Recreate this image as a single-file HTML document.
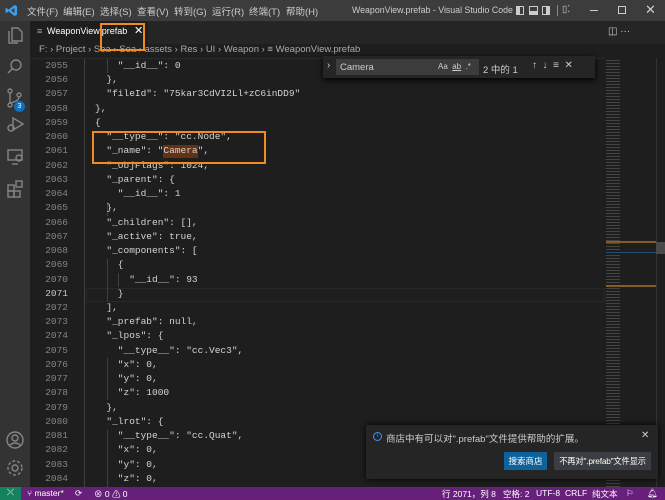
<!DOCTYPE html>
<html><head><meta charset="utf-8"><style>
*{margin:0;padding:0;box-sizing:border-box}
body{width:665px;height:500px;overflow:hidden;background:#1e1e1e;font-family:"Liberation Sans","Noto Sans CJK SC",sans-serif;position:relative;color:#ccc}
.abs{position:absolute;white-space:nowrap}
#title{left:0;top:0;width:665px;height:21px;background:#3c3c3c;font-size:9.5px;color:#ccc}
#title span{position:absolute;top:4px;white-space:nowrap}
#act{left:0;top:21px;width:30px;height:466px;background:#333}
#tabs{left:30px;top:21px;width:635px;height:23px;background:#252526}
#tab{left:30px;top:21px;width:118px;height:23px;background:#1e1e1e;font-size:9px;color:#fff}
#crumb{left:30px;top:44px;width:635px;height:14px;font-size:9.5px;color:#aaa}
.ln{position:absolute;left:30px;width:38px;text-align:right;font:9.5px/14.24px "Liberation Mono",monospace;color:#858585}
.cd{position:absolute;left:95px;font:9.5px/14.24px "Liberation Mono",monospace;color:#d4d4d4;white-space:pre}
#status{left:0;top:487px;width:665px;height:13px;background:#68217a;font-size:8.5px;color:#fff}
#status span{position:absolute;top:1px;white-space:nowrap}
.guide{position:absolute;width:1px;background:#404040}
</style></head><body>
<div id="title" class="abs">
<svg class="abs" style="left:5px;top:4px" width="13" height="13" viewBox="0 0 13 13"><path d="M9.5 1 L12 2.2 V10.8 L9.5 12 L3.5 7.3 L1.5 9 L0.5 8.5 V4.5 L1.5 4 L3.5 5.7Z M9.5 4 L6 6.5 L9.5 9Z" fill="#3ca0ef"/></svg>
<span style="left:27px">文件(F)</span><span style="left:63px">编辑(E)</span><span style="left:100px">选择(S)</span><span style="left:137px">查看(V)</span><span style="left:174px">转到(G)</span><span style="left:212px">运行(R)</span><span style="left:249px">终端(T)</span><span style="left:286px">帮助(H)</span>
<span style="left:352px;font-size:8.8px;top:5px">WeaponView.prefab - Visual Studio Code</span>
<div class="abs" style="left:516px;top:6px;width:8px;height:9px;border:1.5px solid #ccc;border-left-width:4px"></div>
<div class="abs" style="left:529px;top:6px;width:9px;height:9px;border:1.5px solid #ccc;border-bottom-width:4px"></div>
<div class="abs" style="left:542px;top:6px;width:8px;height:9px;border:1.5px solid #ccc;border-right-width:4px"></div>
<div class="abs" style="left:557px;top:5px;width:1px;height:11px;background:#888"></div>
<span style="left:562px;top:4px">▯⁚</span>
<div class="abs" style="left:590px;top:10px;width:8px;height:1px;background:#ccc"></div>
<div class="abs" style="left:618px;top:6px;width:8px;height:8px;border:1px solid #ccc"></div>
<span style="left:645px;top:2px;font-size:13px">✕</span>
</div>
<div id="act" class="abs">
<svg class="abs" style="left:6px;top:4px" width="18" height="180" viewBox="0 0 18 180" fill="none" stroke="#858585" stroke-width="1.4">
<path d="M6 3h6l4 4v9H6z M3 6v12h9"/>
<circle cx="10" cy="40" r="5"/><path d="M6.5 43.5 L2 48"/>
<circle cx="4" cy="66" r="2"/><circle cx="4" cy="80" r="2"/><circle cx="13" cy="70" r="2"/><path d="M4 68v10 M13 72q0 4-9 6"/>
<path d="M7 93l10 6-10 6z"/><circle cx="5" cy="103" r="3"/>
<rect x="2" y="125" width="14" height="10"/><circle cx="13" cy="133" r="3"/><path d="M6 139h6"/>
<rect x="2" y="160" width="6" height="6"/><rect x="2" y="166" width="6" height="6"/><rect x="8" y="166" width="6" height="6"/><rect x="10" y="156" width="6" height="6"/>
</svg>
<div class="abs" style="left:14px;top:80px;width:11px;height:11px;border-radius:50%;background:#0e70c0;color:#fff;font-size:7px;text-align:center;line-height:11px">3</div>
<svg class="abs" style="left:6px;top:410px" width="18" height="50" viewBox="0 0 18 50" fill="none" stroke="#858585" stroke-width="1.4">
<circle cx="9" cy="9" r="8"/><circle cx="9" cy="7" r="3"/><path d="M3.5 14.5q5.5-5 11 0"/>
<circle cx="9" cy="37" r="3"/><circle cx="9" cy="37" r="7" stroke-dasharray="3 2"/>
</svg>
</div>
<div id="tabs" class="abs"></div>
<div id="tab" class="abs"><span class="abs" style="left:7px;top:5px;color:#aaa">≡</span><span class="abs" style="left:17px;top:5px">WeaponView.prefab</span><span class="abs" style="left:104px;top:3px;font-size:11px">✕</span></div>
<span class="abs" style="left:608px;top:26px;font-size:10px;color:#ccc">◫ ···</span>
<div id="crumb" class="abs"><span class="abs" style="left:9px;top:0">F: › Project › Sea › Sea › assets › Res › UI › Weapon › ≡ WeaponView.prefab</span></div>
<div class="abs" style="left:30px;top:58px;width:575px;height:1px;background:#2a2a2a"></div>
<div class="abs" style="left:86px;top:288px;width:519px;height:14px;border:1px solid #282828"></div>
<div class="guide" style="left:84px;top:59px;height:428px"></div>
<div class="guide" style="left:107px;top:59px;height:14px"></div>
<div class="guide" style="left:107px;top:202px;height:14px"></div>
<div class="guide" style="left:107px;top:259px;height:42px"></div>
<div class="guide" style="left:118px;top:273px;height:14px"></div>
<div class="guide" style="left:107px;top:358px;height:42px"></div>
<div class="guide" style="left:107px;top:430px;height:57px"></div>
<div class="ln" style="top:59px">2055<br>2056<br>2057<br>2058<br>2059<br>2060<br>2061<br>2062<br>2063<br>2064<br>2065<br>2066<br>2067<br>2068<br>2069<br>2070<br><span style="color:#c6c6c6">2071</span><br>2072<br>2073<br>2074<br>2075<br>2076<br>2077<br>2078<br>2079<br>2080<br>2081<br>2082<br>2083<br>2084</div>
<div class="abs" style="left:163px;top:145px;width:35px;height:13px;background:#613214"></div>
<div class="cd" style="top:59px">    "__id__": 0
  },
  "fileId": "75kar3CdVI2Ll+zC6inDD9"
},
{
  "__type__": "cc.Node",
  "_name": "Camera",
  "_objFlags": 1024,
  "_parent": {
    "__id__": 1
  },
  "_children": [],
  "_active": true,
  "_components": [
    {
      "__id__": 93
    }
  ],
  "_prefab": null,
  "_lpos": {
    "__type__": "cc.Vec3",
    "x": 0,
    "y": 0,
    "z": 1000
  },
  "_lrot": {
    "__type__": "cc.Quat",
    "x": 0,
    "y": 0,
    "z": 0,</div>
<div class="abs" style="left:606px;top:58px;width:14px;height:429px;background:repeating-linear-gradient(#1e1e1e 0 2px,#444 2px 3px);"></div>
<div class="abs" style="left:606px;top:241px;width:50px;height:2px;background:#8a5a1e"></div>
<div class="abs" style="left:606px;top:252px;width:50px;height:1px;background:#264f78"></div>
<div class="abs" style="left:606px;top:285px;width:50px;height:2px;background:#8a5a1e"></div>
<div class="abs" style="left:656px;top:58px;width:1px;height:429px;background:#333"></div>
<div class="abs" style="left:656px;top:242px;width:9px;height:12px;background:#4a4a4a"></div>
<div class="abs" style="left:323px;top:56px;width:272px;height:22px;background:#252526;box-shadow:0 2px 6px #000"></div>
<span class="abs" style="left:327px;top:60px;font-size:10px;color:#ccc">›</span>
<div class="abs" style="left:336px;top:59px;width:143px;height:16px;background:#3c3c3c"></div>
<span class="abs" style="left:340px;top:62px;font-size:9.5px;color:#ccc">Camera</span>
<span class="abs" style="left:438px;top:62px;font-size:8px;color:#ccc">Aa &nbsp;<u>ab</u> &nbsp;.*</span>
<span class="abs" style="left:483px;top:62px;font-size:9.5px;color:#ccc">2 中的 1</span>
<span class="abs" style="left:532px;top:60px;font-size:10px;color:#ccc">↑ &nbsp;↓ &nbsp;≡ &nbsp;✕</span>
<div class="abs" style="left:366px;top:425px;width:292px;height:54px;background:#252526;box-shadow:0 0 6px #000"></div>
<div class="abs" style="left:373px;top:432px;width:9px;height:9px;border:1px solid #3794ff;border-radius:50%;color:#3794ff;font-size:6px;text-align:center;line-height:7px">i</div>
<span class="abs" style="left:386px;top:431px;font-size:9.5px;color:#ccc">商店中有可以对".prefab"文件提供帮助的扩展。</span>
<span class="abs" style="left:641px;top:430px;font-size:10px;color:#ccc">✕</span>
<div class="abs" style="left:504px;top:452px;width:43px;height:18px;background:#0e639c;color:#fff;font-size:8.5px;text-align:center;line-height:18px">搜索商店</div>
<div class="abs" style="left:554px;top:452px;width:97px;height:18px;background:#3a3d41;color:#fff;font-size:8.3px;text-align:center;line-height:18px;letter-spacing:-.2px">不再对".prefab"文件显示</div>
<div class="abs" style="left:100px;top:23px;width:45px;height:28px;border:2px solid #f08a24"></div>
<div class="abs" style="left:92px;top:131px;width:174px;height:33px;border:2px solid #f08a24"></div>
<div id="status" class="abs">
<div class="abs" style="left:0;top:0;width:21px;height:13px;background:#16825d;color:#fff;font-size:9px;text-align:center">⤫</div>
<span style="left:27px">⑂ master*</span><span style="left:75px">⟳</span><span style="left:94px">⊗ 0 ⚠ 0</span>
<span style="left:442px">行 2071，列 8</span><span style="left:503px">空格: 2</span><span style="left:536px">UTF-8</span><span style="left:565px">CRLF</span><span style="left:592px">纯文本</span><span style="left:626px">⚐</span><span style="left:647px">🔔︎</span>
</div>
</body></html>
